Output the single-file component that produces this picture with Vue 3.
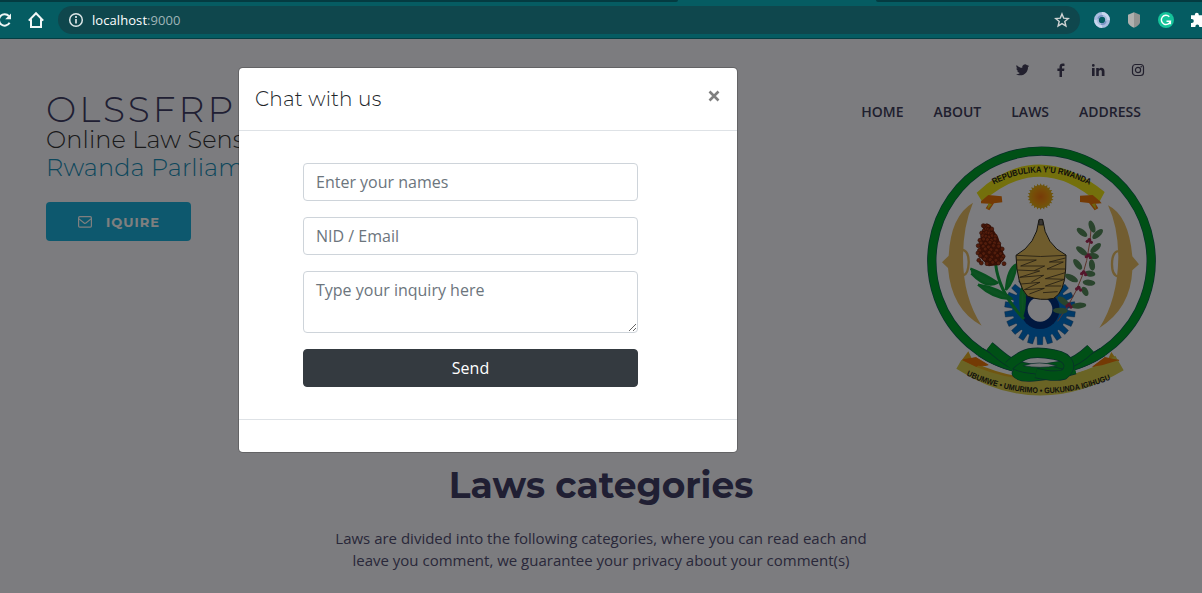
<script setup>
const nav = ['HOME', 'ABOUT', 'LAWS', 'ADDRESS']
const teeth = Array.from({ length: 22 }, (_, i) => (i * 360) / 22)
const rays = Array.from({ length: 24 }, (_, i) => i * 15)
const grains = Array.from({ length: 60 }, (_, i) => {
  const row = Math.floor(i / 5)
  const t = row / 11
  const half = 7 + 27 * Math.min(1, t * 1.6)
  return {
    x: 200 + t * 15 + ((i % 5) - 2) * half * 0.5 + (row % 2 ? 3 : -3),
    y: 255 + row * 10 + (i % 3) * 2
  }
})
const leaves = [
  [516, 258, 70, 19], [533, 280, -42, 20], [486, 275, 38, 19], [485, 331, 38, 20],
  [527, 322, -42, 20], [520, 346, 8, 17], [473, 371, 52, 19], [516, 373, 82, 17],
  [510, 399, 8, 16], [454, 412, 28, 22], [507, 426, 5, 19], [495, 452, 62, 15],
  [430, 482, 38, 21], [476, 495, -5, 23], [421, 510, 3, 22]
]
const berries = [[508, 298], [505, 344], [491, 395], [476, 441], [447, 492]]
</script>

<template>
  <div class="screen">
    <div class="browser">
      <div class="tabs"><i class="tab-left"></i><i class="tab-right"></i></div>
      <div class="toolbar">
        <svg class="reload" width="14" height="16" viewBox="0 0 14 16">
          <path d="M9 4.2A5.700 5.700 0 1 0 9.600 10.800" fill="none" stroke="#eef5f5" stroke-width="2" />
          <path d="M11 1.500V7.300H5.200Z" fill="#eef5f5" />
        </svg>
        <svg class="home" width="18" height="18" viewBox="0 0 18 18">
          <path d="M1.800 9.600 9 2.200l7.200 7.400M4 8.200V16h10V8.200" fill="none" stroke="#f2f7f7" stroke-width="2" />
        </svg>
        <div class="omnibox">
          <svg width="16" height="16" viewBox="0 0 16 16">
            <circle cx="8" cy="8" r="6.300" fill="none" stroke="#dce6e7" stroke-width="1.500" />
            <path d="M8 7v4.600M8 4.100v1.800" stroke="#dce6e7" stroke-width="1.700" />
          </svg>
          <span class="url">localhost<em>:9000</em></span>
          <svg class="star" width="16" height="16" viewBox="0 0 16 16">
            <path d="m8 1.900 1.700 4.200 4.600.4-3.500 3 1.100 4.500L8 11.600 4.100 14l1.100-4.500-3.500-3 4.600-.4Z" fill="none" stroke="#cfd3d3" stroke-width="1.400" />
          </svg>
        </div>
        <div class="extensions">
          <svg width="16" height="16" viewBox="0 0 16 16">
            <circle cx="8" cy="8" r="5.600" fill="none" stroke="#a9bddf" stroke-width="4.800" />
            <path d="M8 1.400A6.600 6.600 0 0 1 14.600 8M8 14.600A6.600 6.600 0 0 1 1.400 8" fill="none" stroke="#c8d7ed" stroke-width="2.600" />
            <path d="M4.100 6.800A4.200 4.200 0 0 1 9 4M11.900 9.200A4.200 4.200 0 0 1 7 12" fill="none" stroke="#7892c3" stroke-width="1.700" />
          </svg>
          <svg width="16" height="16" viewBox="0 0 16 16">
            <path d="M8 .3 14 2.800V10c0 2.500-3 4.500-6 5.800Z" fill="#929391" />
            <path d="M8 .3 2 2.800V10c0 2.500 3 4.500 6 5.800Z" fill="#b0b0ae" />
          </svg>
          <svg width="16" height="16" viewBox="0 0 16 16">
            <circle cx="8" cy="8" r="8" fill="#15c39a" />
            <path d="M11.300 4.700A4.600 4.600 0 1 0 12.400 9.200H8.500M12.400 8.500v3.700" fill="none" stroke="#fff" stroke-width="1.400" />
          </svg>
          <svg class="puzzle" width="16" height="16" viewBox="0 0 16 16">
            <path d="M1 3.300h3.800V2.800a2 2 0 0 1 4 0v.5H13v4h.6a2 2 0 0 1 0 4H13V15H9.200v-.7a1.900 1.900 0 0 0-3.800 0v.7H1v-4h.8a2 2 0 0 0 0-4H1Z" fill="#fff" />
          </svg>
        </div>
      </div>
    </div>

    <main class="page">
      <header class="hero">
        <section class="intro">
          <h1>OLSSFRP</h1>
          <h2>Online Law Sens</h2>
          <h2 class="blue">Rwanda Parliam</h2>
          <button class="inquire" type="button">
            <svg width="14" height="12" viewBox="0 0 14 12">
              <rect x=".6" y=".7" width="12.800" height="10.400" rx="1.200" fill="none" stroke="#fff" stroke-width="1.200" />
              <path d="M1 2.900 6.100 7q.9.7 1.800 0L13 2.900" fill="none" stroke="#fff" stroke-width="1.200" />
            </svg>
            <span>IQUIRE</span>
          </button>
        </section>
        <section class="aside">
          <div class="social">
            <svg width="14" height="14" viewBox="0 0 24 24"><path d="M22.600 4.700c-.8.4-1.700.6-2.700.8 1-.6 1.700-1.500 2-2.600-.9.5-1.900.9-3 1.100A4.700 4.700 0 0 0 10.800 8.300C7 8.100 3.500 6.200 1.200 3.300 0 5.400.6 8.100 2.700 9.500c-.8 0-1.500-.2-2.100-.6 0 2.300 1.600 4.200 3.800 4.700-.7.2-1.400.2-2.100.1.600 1.900 2.300 3.200 4.400 3.300A9.500 9.500 0 0 1 0 19c2.100 1.300 4.300 2.100 7 2.100 8.900 0 13.900-7.500 13.500-14 .9-.7 1.600-1.500 2.100-2.400Z" /></svg>
            <svg width="14" height="14" viewBox="0 0 14 14"><path d="M10.500.7v2.200H9.200c-1 0-1.200.5-1.200 1.200V5.600h2.400L10.100 8H8v6H5.500V8H3.400V5.600h2.100V3.800C5.500 1.700 6.800.5 8.700.5c.8 0 1.500 0 1.800.2Z" /></svg>
            <svg class="linkedin" width="14" height="14" viewBox="0 0 14 14"><path d="M1 4.900h2.600V13H1ZM2.300 1a1.400 1.400 0 1 1 0 2.800 1.400 1.400 0 0 1 0-2.800ZM5.200 4.900h2.600v1.200c.4-.7 1.200-1.400 2.500-1.400 2 0 3.200 1.300 3.200 3.700V13h-2.700V8.700c0-1.100-.4-1.800-1.300-1.800-1.100 0-1.700.7-1.700 1.900V13H5.200Z" /></svg>
            <svg width="14" height="14" viewBox="0 0 14 14"><rect x="1.500" y="1.500" width="11" height="11" rx="3" fill="none" stroke="#45405c" stroke-width="1.200" /><circle cx="7" cy="7" r="2.600" fill="none" stroke="#45405c" stroke-width="1.200" /><circle cx="10.200" cy="3.800" r=".8" /></svg>
          </div>
          <nav><a v-for="item in nav" :key="item">{{ item }}</a></nav>
          <svg class="emblem" width="242" height="265" viewBox="0 -2 726 795">
            <defs>
              <path id="top-arc" d="M221 132Q362 58 506 132" />
              <path id="bottom-arc" d="M139 704Q361 806 577 714" />
              <radialGradient id="sun"><stop offset="0" stop-color="#ee7610" /><stop offset=".65" stop-color="#ee9910" /><stop offset="1" stop-color="#e1ad19" /></radialGradient>
            </defs>
            <!-- ribbons -->
            <path d="M170 156Q350 -12 554 154L536 188Q360 30 187 184Z" fill="#e8e018" />
            <path d="m183 182 22-19 40 4 2 18-25 3-14 21-11-6 9-14-23-1Z" fill="#e8750a" />
            <path d="m540 182-22-19-38 2v19l27 3 17 22 11-6-8-14 18-1Z" fill="#e8750a" />
            <path d="M202 207l14-16-11-3ZM528 207l-13-16 11-3Z" fill="#dbca20" />
            <text class="motto top-motto"><textPath href="#top-arc" textLength="300" lengthAdjust="spacingAndGlyphs">REPUBULIKA Y'U RWANDA</textPath></text>
            <path d="M279 678A329 329 0 1 1 450 678" fill="none" stroke="#125b58" stroke-width="28" />
            <path d="M279 678A329 329 0 1 1 450 678" fill="none" stroke="#00a02c" stroke-width="24" />
            <path d="M145 632 124 660Q360 785 592 660L574 634 560 664Q360 760 160 664Z" fill="#e0ad24" />
            <path d="M126 658 168 650 206 672 196 676 176 674 168 680ZM598 658l-44-8-38 30 40-4 18 8Z" fill="#e8750a" />
            <path d="m124 658-15 26Q354 843 611 689l-25-44Q360 780 124 658Z" fill="#d5c94a" />
            <!-- ring over the lower ribbon, then the knot -->
            <path d="M181 634A329 329 0 0 0 279 678M450 678A329 329 0 0 0 548 634" fill="none" stroke="#125b58" stroke-width="28" />
            <path d="M176 631A329 329 0 0 0 285 680M445 680A329 329 0 0 0 553 631" fill="none" stroke="#00a02c" stroke-width="24" />
            <path d="M127 656 168 650 206 674 180 676Z M598 658 555 650 516 678 546 674Z" fill="#e8750a" />
            <g fill="none" stroke-linejoin="round">
              <path d="M512 624Q470 664 430 674Q360 684 290 698C305 718 375 704 440 693L465 686" stroke="#125b58" stroke-width="30" />
              <path d="M512 624Q470 664 430 674Q360 684 290 698C305 718 375 704 440 693L465 686" stroke="#00a02c" stroke-width="26" />
              <path d="M208 617C250 650 270 680 345 685Q410 693 431 702" stroke="#125b58" stroke-width="31" />
              <path d="M208 617C250 650 270 680 345 685Q410 693 431 702" stroke="#00a02c" stroke-width="27" />
              <path d="M268 675Q283 658 309 645Q340 629 403 642C451 650 458 684 431 702Q400 710 348 697" stroke="#125b58" stroke-width="31" />
              <path d="M265 677Q283 658 309 645Q340 629 403 642C451 650 458 684 431 702Q400 710 348 697" stroke="#00a02c" stroke-width="27" />
            </g>
            <path d="M310 675q46-16 100 0-49 10-100 0Z" fill="#f0f1f6" stroke="#125b58" stroke-width="2" />
            <text class="motto"><textPath href="#bottom-arc" textLength="447" lengthAdjust="spacingAndGlyphs">UBUMWE • UMURIMO • GUKUNDA IGIHUGU</textPath></text>
            <!-- sun -->
            <g transform="translate(362 168)"><path v-for="a in rays" :key="a" d="M-7-25 0-40 7-25Z" :transform="`rotate(${a})`" fill="#d5a51a" /><circle r="34" fill="url(#sun)" /></g>
            <!-- shields -->
            <path d="M159 186Q92 225 86 345L66 365 84 382Q94 506 185 555Q128 469 129 345Q130 255 159 186Z" fill="#e4bb62" />
            <path d="M127 327q20 5 19 39t-16 38" fill="none" stroke="#e4bb62" stroke-width="7" />
            <path d="M564 194Q626 224 637 347L657 371 637 389Q632 503 538 562Q593 477 595 350Q594 256 564 194Z" fill="#e4bb62" />
            <path d="M594 331q-18 5-18 40t20 37" fill="none" stroke="#e4bb62" stroke-width="7" />
            <!-- gear -->
            <g transform="translate(360 506)">
              <path v-for="a in teeth" :key="a" d="m-9-78 1-28H8l1 28Z" :transform="`rotate(${a})`" fill="#0072cf" stroke="#123963" stroke-width="1" />
              <circle r="83" fill="#0072cf" /><circle r="59" fill="#00307e" /><circle r="37" fill="#f8f9ff" />
            </g>
            <!-- sorghum -->
            <path d="M227 370Q236 455 312 535" fill="none" stroke="#13a03f" stroke-width="9" />
            <path d="M151 384q40 15 82 42-34 20-79-28M174 432q62 10 101 42-50 4-101-42M258 448q4-65 32-77-8 53-32 77M306 530q-11-73 3-91 13 44-3 91" fill="#1aa744" stroke="#13a03f" stroke-width="7" stroke-linejoin="round" />
            <path d="M195 250 211 253 235 291 255 351 238 373 206 377 176 346 182 282Z" fill="#75210c" />
            <g><circle v-for="(g, i) in grains" :key="i" :cx="g.x" :cy="g.y" r="6" fill="#a53a18" stroke="#521508" stroke-width="1.800" /></g>
            <!-- basket -->
            <path d="M357 237h11Q376 313 438 343L437 385Q434 455 401 473Q361 482 322 466Q290 432 288 344Q350 310 357 237Z" fill="#dfb85a" stroke="#2c291f" stroke-width="3" />
            <path d="M358 236h9l3 17h-14Z" fill="#74716c" stroke="#222" stroke-width="2" />
            <path d="M288 344q73 7 150 0M291 358h58l-47 18h72l-31 14M436 352l-48 12h42l-49 21h56M291 388l68 3-60 19 72-6-37 20M436 396l-60 18 58 2-58 20 48 0M303 430l57-5-47 22 60-4-45 17M413 453l-44 3" fill="none" stroke="#473b25" stroke-width="2.500" />
            <!-- coffee -->
            <path d="M515 247Q512 302 500 360Q480 450 413 542" fill="none" stroke="#b66655" stroke-width="3" />
            <ellipse v-for="(l, i) in leaves" :key="i" :cx="l[0]" :cy="l[1]" :rx="l[3]" ry="9" :transform="`rotate(${l[2]} ${l[0]} ${l[1]})`" fill="#55895a" />
            <g v-for="(b, i) in berries" :key="'b' + i" fill="#a92b56"><circle :cx="b[0]" :cy="b[1]" r="6" /><circle :cx="b[0] - 6" :cy="b[1] + 4" r="5" /><circle :cx="b[0] + 6" :cy="b[1] + 7" r="5" /></g>
          </svg>
        </section>
      </header>

      <section class="categories">
        <h3>Laws categories</h3>
        <p>Laws are divided into the following categories, where you can read each and<br>leave you comment, we guarantee your privacy about your comment(s)</p>
      </section>
    </main>

    <div class="backdrop">
      <div class="modal">
        <div class="modal-header">
          <h5>Chat with us</h5>
          <button class="close" type="button" aria-label="Close">
            <svg width="12" height="12" viewBox="0 0 12 12"><path d="m1.500 1.500 9 9m0-9-9 9" stroke="#7f7f7f" stroke-width="2.600" /></svg>
          </button>
        </div>
        <form class="modal-body">
          <input type="text" placeholder="Enter your names">
          <input type="text" placeholder="NID / Email">
          <textarea placeholder="Type your inquiry here"></textarea>
          <button class="send" type="button">Send</button>
        </form>
        <div class="modal-footer"></div>
      </div>
    </div>
  </div>
</template>

<style>
body { margin: 0; overflow: hidden; }
</style>

<style scoped>
* { box-sizing: border-box; }
svg { display: block; flex: none; }
.screen { position: relative; width: 1202px; height: 593px; overflow: hidden; font-family: "Open Sans", sans-serif; }
.browser { height: 39px; background: #055c62; border-bottom: 1px solid #043e43; }
.tabs { height: 2px; display: flex; justify-content: space-between; }
.tabs i { background: #043b41; }
.tab-left { width: 678px; border-bottom-right-radius: 3px; }
.tab-right { width: 326px; border-bottom-left-radius: 3px; }
.toolbar { height: 36px; display: flex; align-items: center; }
.home { margin-left: 13px; }
.omnibox { flex: none; margin-left: 13px; width: 1022px; height: 28px; padding: 0 10px; border-radius: 14px; background: #0f474d; display: flex; align-items: center; }
.url { margin-left: 8px; color: #fff; font: 13px/18px "Open Sans", sans-serif; white-space: nowrap; letter-spacing: .07px; }
.url em { font-style: normal; color: #9fb5b8; }
.star { margin-left: auto; }
.extensions { display: flex; gap: 16px; margin-left: 14px; }
.page { height: 554px; background: #f8f9ff; }
.hero { height: 424px; display: flex; justify-content: space-between; padding: 0 40px 0 46px; }
.intro { padding-top: 50px; }
h1, h2, h3, h5, p { margin: 0; }
h1, h2, h3, h5, .inquire { font-family: Montserrat, Inter, sans-serif; white-space: nowrap; }
h1 { height: 37px; font-size: 36px; line-height: 40px; font-weight: 300; letter-spacing: 3px; color: #413e66; }
h2 { font-size: 24px; line-height: 28px; font-weight: 300; letter-spacing: .12px; color: #343436; }
.blue { color: #1b8fb8; }
.inquire { display: flex; align-items: center; gap: 14px; margin-top: 20px; width: 145px; height: 39px; padding: 0 0 0 32px; border: 0; border-radius: 4px; background: #1bb1dc; color: #fff; font-size: 13px; font-weight: 700; letter-spacing: 1px; }
.aside { display: flex; flex-direction: column; align-items: flex-end; padding-top: 24px; }
.social { display: flex; gap: 24.500px; margin-right: 17px; fill: #45405c; }
.linkedin { margin: 0 1.500px 0 -1.500px; }
nav { display: flex; gap: 30px; margin: 24px 21px 0 0; height: 39px; color: #413e5c; font-size: 14px; line-height: 22px; font-weight: 600; }
.emblem { overflow: visible; }
.motto { font: 700 24px "Liberation Sans", sans-serif; fill: #222219; }
.top-motto { font-size: 26px; }
.categories { text-align: center; }
h3 { font-size: 36px; line-height: 44px; height: 50px; font-weight: 700; color: #413e66; }
.categories p { margin-top: 14px; color: #535074; font-size: 15px; line-height: 22px; white-space: nowrap; }
.backdrop { position: absolute; inset: 39px 0 0; background: rgba(0, 0, 0, .5); }
.modal { width: 500px; margin: 28px 0 0 238px; border: 1px solid rgba(0, 0, 0, .2); background: #fff; background-clip: padding-box; border-radius: 4.800px; }
.modal-header { height: 63px; padding: 16px; display: flex; justify-content: space-between; border-bottom: 1px solid #dee2e6; }
h5 { font-size: 20px; line-height: 30px; font-weight: 300; letter-spacing: .2px; color: #212529; }
.close { padding: 6px 1px; height: 24px; border: 0; background: none; }
.modal-body { padding: 32px 99px 32px 64px; display: flex; flex-direction: column; gap: 16px; }
input, textarea { display: block; width: 335px; height: 38px; padding: 6px 12px; border: 1px solid #ced4da; border-radius: 4px; font: 16px/24px "Open Sans", sans-serif; background: #fff; outline: 0; }
textarea { height: 62px; resize: vertical; }
input::placeholder, textarea::placeholder { color: #6c757d; opacity: 1; }
.send { height: 38px; padding: 0; border: 1px solid #343a40; border-radius: 4px; color: #fff; background: #343a40; font: 16px/24px "Open Sans", sans-serif; }
.modal-footer { height: 33px; border-top: 1px solid #dee2e6; }
</style>
